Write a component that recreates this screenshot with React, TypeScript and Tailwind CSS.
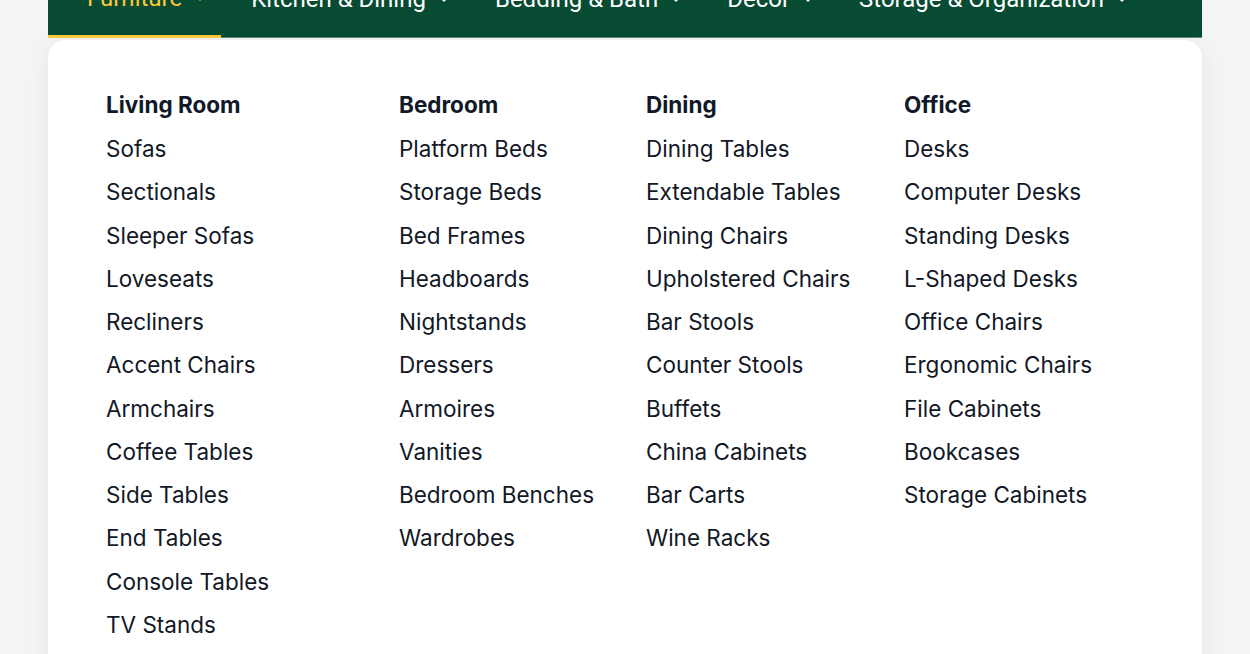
import React from 'react';

const navItems = ['Furniture', 'Kitchen & Dining', 'Bedding & Bath', 'Decor', 'Storage & Organization'];

const columns: { title: string; items: string[]; width: string }[] = [
    {
        title: 'Living Room',
        width: 'w-[293px]',
        items: ['Sofas', 'Sectionals', 'Sleeper Sofas', 'Loveseats', 'Recliners', 'Accent Chairs', 'Armchairs', 'Coffee Tables', 'Side Tables', 'End Tables', 'Console Tables', 'TV Stands'],
    },
    {
        title: 'Bedroom',
        width: 'w-[247px]',
        items: ['Platform Beds', 'Storage Beds', 'Bed Frames', 'Headboards', 'Nightstands', 'Dressers', 'Armoires', 'Vanities', 'Bedroom Benches', 'Wardrobes'],
    },
    {
        title: 'Dining',
        width: 'w-[258px]',
        items: ['Dining Tables', 'Extendable Tables', 'Dining Chairs', 'Upholstered Chairs', 'Bar Stools', 'Counter Stools', 'Buffets', 'China Cabinets', 'Bar Carts', 'Wine Racks'],
    },
    {
        title: 'Office',
        width: 'flex-1',
        items: ['Desks', 'Computer Desks', 'Standing Desks', 'L-Shaped Desks', 'Office Chairs', 'Ergonomic Chairs', 'File Cabinets', 'Bookcases', 'Storage Cabinets'],
    },
];

const Chevron: React.FC = () => (
    <svg width="16" height="16" viewBox="0 0 24 24" fill="none" stroke="currentColor" strokeWidth="2.2" strokeLinecap="round" strokeLinejoin="round" className="ml-[10px]">
        <path d="M6 9l6 6 6-6" />
    </svg>
);

export default function App() {
    return (
        <div className="min-h-screen bg-[#f3f4f6] overflow-hidden">
            <div className="w-[1154px] mx-auto">
                <nav className="flex items-stretch h-[78px] -mt-[40px] bg-[#064b32] border-b border-[#5f8f78] font-['Roboto',sans-serif] text-[24px] text-white">
                    {navItems.map((label, i) => (
                        <div
                            key={label}
                            className={
                                i === 0
                                    ? 'flex items-center pl-[39px] pr-[13px] text-[#fcc93a] border-b-[3px] border-[#fcc93a] -mb-px'
                                    : 'flex items-center pl-[30px] pr-[13px]'
                            }
                        >
                            <span>{label}</span>
                            <Chevron />
                        </div>
                    ))}
                </nav>

                {/* mega menu panel */}
                <div className="mt-[2px] bg-white rounded-t-[18px] shadow-[0_4px_24px_rgba(0,0,0,0.06)] pl-[58px] pt-[50px] pb-10 h-[640px] font-['Inter',sans-serif] text-[#111827]">
                    <div className="flex">
                        {columns.map((col) => (
                            <div key={col.title} className={col.width}>
                                <h3 className="text-[22.5px] font-bold leading-[30px] mb-[14px]">{col.title}</h3>
                                <ul className="flex flex-col gap-[13.27px]">
                                    {col.items.map((item) => (
                                        <li key={item} className="text-[22.5px] leading-[30px]">
                                            {item}
                                        </li>
                                    ))}
                                </ul>
                            </div>
                        ))}
                    </div>
                </div>
            </div>
        </div>
    );
}
